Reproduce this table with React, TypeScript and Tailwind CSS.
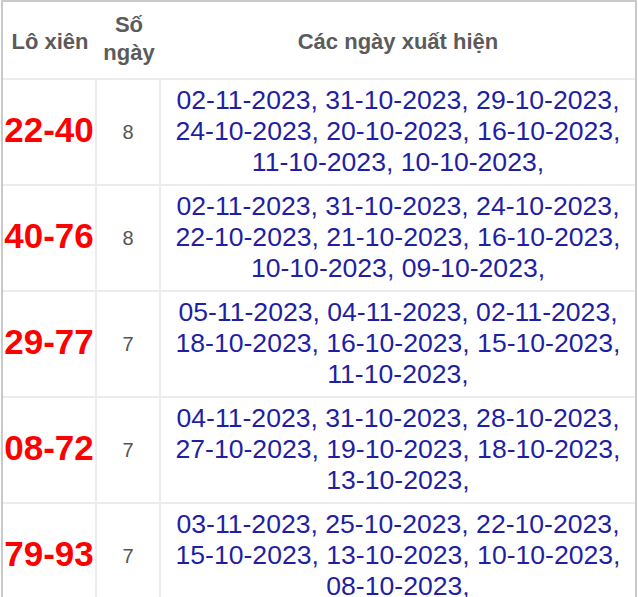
import React from "react";

const rows: { pair: string; count: number; lines: string[] }[] = [
  {
    pair: "22-40",
    count: 8,
    lines: [
      "02-11-2023, 31-10-2023, 29-10-2023,",
      "24-10-2023, 20-10-2023, 16-10-2023,",
      "11-10-2023, 10-10-2023,",
    ],
  },
  {
    pair: "40-76",
    count: 8,
    lines: [
      "02-11-2023, 31-10-2023, 24-10-2023,",
      "22-10-2023, 21-10-2023, 16-10-2023,",
      "10-10-2023, 09-10-2023,",
    ],
  },
  {
    pair: "29-77",
    count: 7,
    lines: [
      "05-11-2023, 04-11-2023, 02-11-2023,",
      "18-10-2023, 16-10-2023, 15-10-2023,",
      "11-10-2023,",
    ],
  },
  {
    pair: "08-72",
    count: 7,
    lines: [
      "04-11-2023, 31-10-2023, 28-10-2023,",
      "27-10-2023, 19-10-2023, 18-10-2023,",
      "13-10-2023,",
    ],
  },
  {
    pair: "79-93",
    count: 7,
    lines: [
      "03-11-2023, 25-10-2023, 22-10-2023,",
      "15-10-2023, 13-10-2023, 10-10-2023,",
      "08-10-2023,",
    ],
  },
];

export default function App() {
  return (
    <div className="w-[638px] h-[597px] overflow-hidden bg-white font-['Liberation_Sans',Arial,sans-serif]">
      <div className="ml-[1px] w-[636px] border-2 border-b-0 border-[#c9c9c9] bg-white">
        <div className="flex h-[78px] border-b-2 border-[#ececec] text-[22px] font-bold text-[#5b5b5b]">
          <div className="w-[94px] flex items-center justify-center pt-[3px]">Lô xiên</div>
          <div className="w-[64px] flex flex-col items-center justify-center leading-[28px] pb-[2px]">
            <span>Số</span>
            <span>ngày</span>
          </div>
          <div className="flex-1 flex items-center justify-center pt-[3px]">Các ngày xuất hiện</div>
        </div>
        {rows.map((r) => (
          <div key={r.pair} className="flex h-[106px] border-b-2 border-[#ececec]">
            <div className="w-[94px] border-r-2 border-[#ececec] flex items-center justify-center pb-[3px] text-[35px] font-bold text-[#ff0000]">
              {r.pair}
            </div>
            <div className="w-[64px] border-r-2 border-[#ececec] flex items-center justify-center text-[20px] text-[#555555]">
              {r.count}
            </div>
            <div className="flex-1 flex flex-col items-center justify-center pb-[2px] text-[26.6px] leading-[31px] text-[#1f1fa3]">
              {r.lines.map((l, i) => (
                <div key={i} className="whitespace-nowrap">
                  {l}
                </div>
              ))}
            </div>
          </div>
        ))}
      </div>
    </div>
  );
}
